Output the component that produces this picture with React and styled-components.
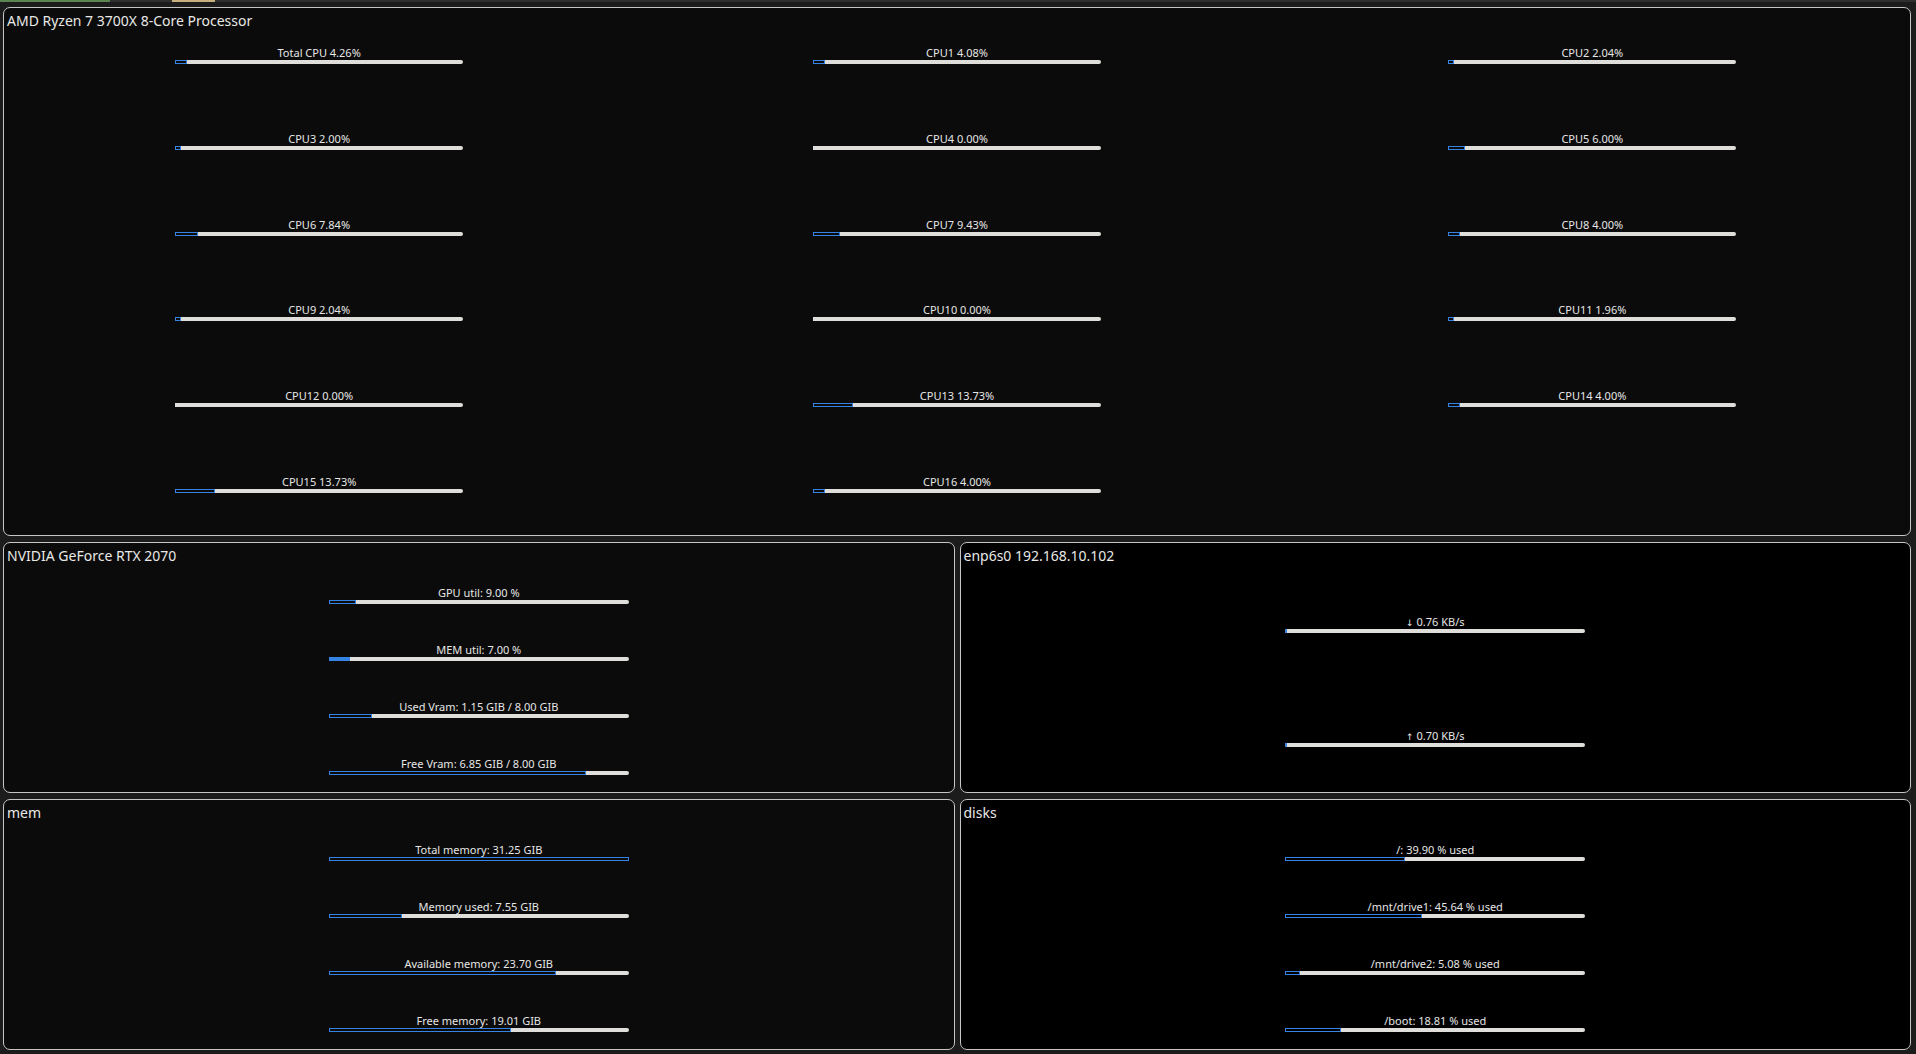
import React from "react";
import styled, { createGlobalStyle } from "styled-components";

const GlobalStyle = createGlobalStyle`
  html, body {
    margin: 0;
    padding: 0;
    background: #1c1c1c;
  }
  body {
    font-family: "Noto Sans", "DejaVu Sans", sans-serif;
    color: #e6e6e6;
  }
`;

const Page = styled.div`
  width: 1916px;
  height: 1054px;
  display: flex;
  flex-direction: column;
  overflow: hidden;
`;

const TopStrip = styled.div`
  height: 2px;
  display: flex;
  background: #2e2f2e;
  flex: none;
`;

const StripSeg = styled.div`
  width: ${(p) => p.$w}px;
  background: ${(p) => p.$c};
`;

const Board = styled.div`
  flex: 1;
  display: grid;
  grid-template-columns: 1fr 1fr;
  grid-template-rows: 529px 251px 251px;
  gap: 6px 5px;
  padding: 5px 5px 0 3px;
  min-height: 0;
`;

const Panel = styled.section`
  grid-column: ${(p) => (p.$wide ? "1 / span 2" : "auto")};
  border: 1px solid #c6c6c4;
  border-radius: 7px;
  background: ${(p) => (p.$black ? "#000000" : "#0b0b0b")};
  display: flex;
  flex-direction: column;
  min-height: 0;
  overflow: hidden;
`;

const Title = styled.div`
  height: 24px;
  flex: none;
  padding: 3px 0 0 3px;
  box-sizing: border-box;
  font-size: 14px;
  line-height: 20px;
  color: #e8e8e6;
  white-space: nowrap;
`;

const CpuGrid = styled.div`
  display: grid;
  grid-template-columns: 1fr 1fr 1fr;
  justify-items: center;
  align-content: start;
  row-gap: 67.8px;
  padding: 14px 0 0 0;
`;

const CpuCell = styled.div`
  display: flex;
  justify-content: center;
  width: 100%;
  padding-right: ${(p) => (p.$first ? 5 : 0)}px;
  box-sizing: border-box;
`;

const Rows = styled.div`
  flex: none;
  display: grid;
  grid-template-rows: repeat(${(p) => p.$n}, ${(p) => 228 / p.$n}px);
  justify-items: center;
  align-items: center;
  margin-top: ${(p) => (p.$n > 2 ? -1 : 0)}px;
`;

const Meter = styled.div`
  display: flex;
  flex-direction: column;
  align-items: stretch;
  width: ${(p) => p.$w}px;
`;

const Label = styled.div`
  font-size: 11px;
  line-height: 14px;
  height: 14px;
  text-align: center;
  color: #e6e6e6;
  white-space: nowrap;
`;

const Arrow = styled.span`
  font-size: 9px;
  margin-right: 3px;
`;

const Track = styled.div`
  display: flex;
  height: 4px;
`;

const Fill = styled.div`
  flex: none;
  box-sizing: border-box;
  border: 1px solid #3584e4;
  background: ${(p) => (p.$solid ? "#3584e4" : "transparent")};
`;

const Rest = styled.div`
  flex: 1;
  background: #e0deda;
  border-radius: 0 2px 2px 0;
`;

function Bar({ label, arrow, pct, width = 300, solid, minFill = 0 }) {
  let fw = Math.round((pct / 100) * width);
  if (pct > 0 && fw < minFill) fw = minFill;
  return (
    <Meter $w={width}>
      <Label>
        {arrow && <Arrow>{arrow}</Arrow>}
        {label}
      </Label>
      <Track>
        {fw > 0 && <Fill $solid={solid} style={{ width: fw }} />}
        {fw < width && <Rest />}
      </Track>
    </Meter>
  );
}

const cpus = [
  ["Total CPU", 4.26],
  ["CPU1", 4.08],
  ["CPU2", 2.04],
  ["CPU3", 2.0],
  ["CPU4", 0.0],
  ["CPU5", 6.0],
  ["CPU6", 7.84],
  ["CPU7", 9.43],
  ["CPU8", 4.0],
  ["CPU9", 2.04],
  ["CPU10", 0.0],
  ["CPU11", 1.96],
  ["CPU12", 0.0],
  ["CPU13", 13.73],
  ["CPU14", 4.0],
  ["CPU15", 13.73],
  ["CPU16", 4.0],
];

const gpu = [
  { label: "GPU util: 9.00 %", pct: 9 },
  { label: "MEM util: 7.00 %", pct: 7, solid: true },
  { label: "Used Vram: 1.15 GIB / 8.00 GIB", pct: 14.4 },
  { label: "Free Vram: 6.85 GIB / 8.00 GIB", pct: 85.6 },
];

const net = [
  { arrow: "↓", label: "0.76 KB/s", pct: 0.5, solid: true, minFill: 2 },
  { arrow: "↑", label: "0.70 KB/s", pct: 0.5, solid: true, minFill: 2 },
];

const mem = [
  { label: "Total memory: 31.25 GIB", pct: 100 },
  { label: "Memory used: 7.55 GIB", pct: 24.2 },
  { label: "Available memory: 23.70 GIB", pct: 75.8 },
  { label: "Free memory: 19.01 GIB", pct: 60.8 },
];

const disks = [
  { label: "/: 39.90 % used", pct: 39.9 },
  { label: "/mnt/drive1: 45.64 % used", pct: 45.64 },
  { label: "/mnt/drive2: 5.08 % used", pct: 5.08 },
  { label: "/boot: 18.81 % used", pct: 18.81 },
];

function SmallPanel({ title, items, black }) {
  return (
    <Panel $black={black}>
      <Title>{title}</Title>
      <Rows $n={items.length}>
        {items.map((it) => (
          <Bar key={it.label} {...it} />
        ))}
      </Rows>
    </Panel>
  );
}

export default function App() {
  return (
    <Page>
      <GlobalStyle />
      <TopStrip>
        <StripSeg $w={110} $c="#5b8450" />
        <StripSeg $w={62} $c="#2e2f2e" />
        <StripSeg $w={43} $c="#c8b07c" />
      </TopStrip>
      <Board>
        <Panel $wide>
          <Title>AMD Ryzen 7 3700X 8-Core Processor</Title>
          <CpuGrid>
            {cpus.map(([n, v], i) => (
              <CpuCell key={n} $first={i % 3 === 0}>
                <Bar
                  width={288}
                  label={`${n} ${v.toFixed(2)}%`}
                  pct={v}
                  minFill={4}
                />
              </CpuCell>
            ))}
          </CpuGrid>
        </Panel>
        <SmallPanel title="NVIDIA GeForce RTX 2070" items={gpu} />
        <SmallPanel title="enp6s0 192.168.10.102" items={net} black />
        <SmallPanel title="mem" items={mem} />
        <SmallPanel title="disks" items={disks} black />
      </Board>
    </Page>
  );
}
